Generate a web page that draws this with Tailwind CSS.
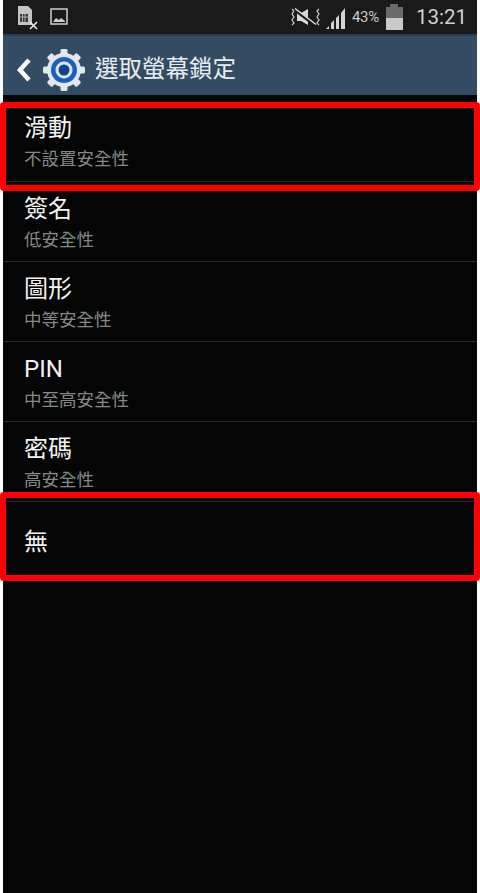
<!DOCTYPE html>
<html lang="zh-Hant">
<head>
<meta charset="UTF-8">
<title>選取螢幕鎖定</title>
<script src="https://cdn.jsdelivr.net/npm/@tailwindcss/browser@4"></script>
</head>
<body class="bg-white">
<div class="relative w-[480px] h-[893px] overflow-hidden bg-white px-[3px] font-['Roboto','Noto_Sans_CJK_TC',sans-serif]">
  <div class="h-full w-[474px] flex flex-col bg-[#050505]">
    <!-- status bar -->
    <div class="h-[34px] shrink-0 bg-[#1a1a1a] flex items-center pl-[13px] pr-[10px]">
      <svg class="w-[24px] h-[26px]" viewBox="0 0 24 26">
        <path d="M2 2h10l4 4v15H2z" fill="#c4c4c4"/>
        <path d="M4 10h8v8H4z" fill="#3a3a3a"/>
        <path d="M6.5 10v8M9 10v8M4 13h8" stroke="#c4c4c4" stroke-width=".8"/>
        <path d="M14 18l7 7M21 18l-7 7" stroke="#e8e8e8" stroke-width="1.6"/>
      </svg>
      <svg class="w-[18px] h-[18px] ml-[10px]" viewBox="0 0 18 18">
        <rect x="1" y="1" width="16" height="15" fill="none" stroke="#cfcfcf" stroke-width="1.5"/>
        <path d="M3 14l3-4 3 2 2-2 4 3v1z" fill="#cfcfcf"/>
      </svg>
      <div class="ml-auto flex items-center">
        <svg class="w-[31px] h-[20px]" viewBox="0 0 31 20">
          <path d="M2 2l2 2-2 3 2 3-2 3 2 3-2 2M29 2l-2 2 2 3-2 3 2 3-2 3 2 2" fill="none" stroke="#ccc" stroke-width="1.2"/>
          <path d="M7 6h4l7-4v16l-7-4H7z" fill="#d8d8d8"/>
          <path d="M5 3l21 16" stroke="#1a1a1a" stroke-width="3"/>
          <path d="M5 1.5l21 16" stroke="#e0e0e0" stroke-width="1.5"/>
        </svg>
        <svg class="w-[22px] h-[23px] ml-[4px]" viewBox="0 0 22 23">
          <path d="M1 23l3-3v3zM6 23v-6l3-3v9zM11 23V12l3-3v14zM16 23V7l4-5v21z" fill="#d5d5d5"/>
        </svg>
        <span class="ml-[5px] text-[15px] leading-none text-[#c8c8c8] tracking-[-0.3px]">43%</span>
        <div class="ml-[7px] flex flex-col items-center w-[17px]">
          <div class="w-[8px] h-[3px] bg-[#6a6a6a]"></div>
          <div class="w-[17px] h-[11px] bg-[#6a6a6a]"></div>
          <div class="w-[17px] h-[12px] bg-[#c9c9c9]"></div>
        </div>
        <span class="ml-[13px] text-[20.5px] leading-none text-[#d0d0d0]">13:21</span>
      </div>
    </div>
    <!-- action bar -->
    <div class="h-[61px] shrink-0 bg-[#344c63] flex items-center border-t-2 border-[#2b3d50] pt-[8px]">
      <svg class="w-[16px] h-[26px] ml-[13px]" viewBox="0 0 16 26">
        <path d="M13 3L4 13l9 10" fill="none" stroke="#fff" stroke-width="4.5"/>
      </svg>
      <svg class="w-[44px] h-[44px] ml-[10px]" viewBox="0 0 44 44">
        <g fill="#e4e7ea">
          <circle cx="22" cy="22" r="17"/>
          <rect x="18.5" y="1" width="7" height="42" rx="1.5"/>
          <rect x="18.5" y="1" width="7" height="42" rx="1.5" transform="rotate(45 22 22)"/>
          <rect x="18.5" y="1" width="7" height="42" rx="1.5" transform="rotate(90 22 22)"/>
          <rect x="18.5" y="1" width="7" height="42" rx="1.5" transform="rotate(135 22 22)"/>
        </g>
        <circle cx="22" cy="22" r="13" fill="#1c5fc4"/>
        <circle cx="22" cy="22" r="8.5" fill="#dfe6ee"/>
        <circle cx="22" cy="22" r="5.5" fill="#14418c"/>
      </svg>
      <span class="ml-[9px] text-[23.5px] leading-none text-[#e8ecef]">選取螢幕鎖定</span>
    </div>
    <!-- list -->
    <div class="flex flex-col">
      <div class="h-[87px] flex flex-col pl-[21px] pt-[19px] border-b border-[#2a2a2a]">
        <span class="text-[24px] leading-[28px] text-[#f2f2f2]">滑動</span>
        <span class="mt-[7px] text-[17.5px] leading-[20px] text-[#828a8b]">不設置安全性</span>
      </div>
      <div class="h-[80px] flex flex-col pl-[21px] pt-[13px] border-b border-[#2a2a2a]">
        <span class="text-[24px] leading-[28px] text-[#f2f2f2]">簽名</span>
        <span class="mt-[7px] text-[17.5px] leading-[20px] text-[#828a8b]">低安全性</span>
      </div>
      <div class="h-[80px] flex flex-col pl-[21px] pt-[13px] border-b border-[#2a2a2a]">
        <span class="text-[24px] leading-[28px] text-[#f2f2f2]">圖形</span>
        <span class="mt-[7px] text-[17.5px] leading-[20px] text-[#828a8b]">中等安全性</span>
      </div>
      <div class="h-[80px] flex flex-col pl-[21px] pt-[13px] border-b border-[#2a2a2a]">
        <span class="text-[24px] leading-[28px] text-[#f2f2f2]">PIN</span>
        <span class="mt-[7px] text-[17.5px] leading-[20px] text-[#828a8b]">中至高安全性</span>
      </div>
      <div class="h-[80px] flex flex-col pl-[21px] pt-[13px] border-b border-[#2a2a2a]">
        <span class="text-[24px] leading-[28px] text-[#f2f2f2]">密碼</span>
        <span class="mt-[7px] text-[17.5px] leading-[20px] text-[#828a8b]">高安全性</span>
      </div>
      <div class="h-[80px] flex items-center pl-[21px]">
        <span class="text-[24px] leading-[28px] text-[#f2f2f2]">無</span>
      </div>
    </div>
  </div>
  <!-- red highlight boxes -->
  <div class="absolute left-0 top-[102px] w-[480px] h-[89px] border-[6px] border-[#fe0000] rounded-[4px]"></div>
  <div class="absolute left-0 top-[492px] w-[480px] h-[89px] border-[6px] border-[#fe0000] rounded-[4px]"></div>
</div>
</body>
</html>
